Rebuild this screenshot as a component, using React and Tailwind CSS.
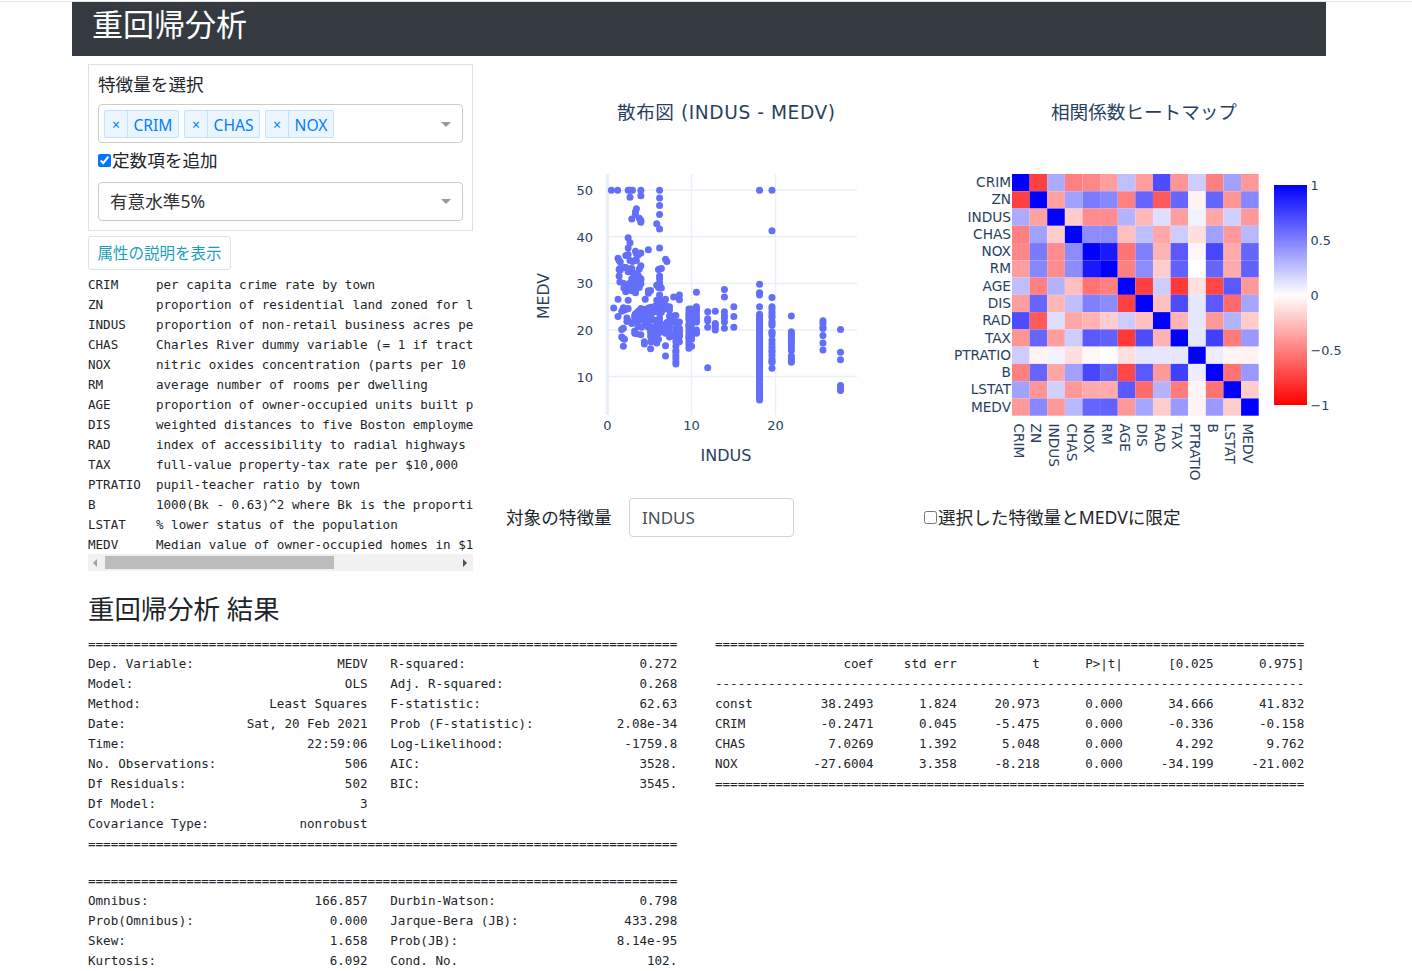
const names = ["CRIM", "ZN", "INDUS", "CHAS", "NOX", "RM", "AGE", "DIS", "RAD", "TAX", "PTRATIO", "B", "LSTAT", "MEDV"];

const corr = [
  [1, -.75, .33, -.5, -.47, -.38, .25, -.38, .7, -.42, .2, -.5, .37, -.4],
  [-.75, 1, -.37, .37, .52, .47, -.5, .6, -.65, .6, -.05, .6, -.42, .47],
  [.33, -.37, 1, -.2, -.45, -.45, .3, -.28, .13, -.38, .05, -.35, .18, -.4],
  [-.5, .37, -.2, 1, .45, .45, -.25, .25, -.35, .2, -.13, .37, -.4, .28],
  [-.47, .52, -.45, .45, 1, .9, -.55, .5, -.3, .65, -.03, .72, -.33, .6],
  [-.38, .47, -.45, .45, .9, 1, -.5, .45, -.2, .62, 0, .6, -.33, .62],
  [.25, -.5, .3, -.25, -.55, -.5, 1, -.75, .2, -.78, -.12, -.72, .65, -.4],
  [-.38, .6, -.28, .25, .5, .45, -.75, 1, -.25, .7, .1, .65, -.58, .35],
  [.7, -.65, .13, -.35, -.3, -.2, .2, -.25, 1, -.3, .1, -.4, .3, -.2],
  [-.42, .6, -.38, .2, .65, .62, -.78, .7, -.3, 1, .1, .75, -.52, .4],
  [.2, -.05, .05, -.13, -.03, 0, -.12, .1, .1, .1, 1, .07, -.04, -.05],
  [-.5, .6, -.35, .37, .72, .6, -.72, .65, -.4, .75, .07, 1, -.55, .4],
  [.37, -.42, .18, -.4, -.33, -.33, .65, -.58, .3, -.52, -.04, -.55, 1, -.2],
  [-.4, .47, -.4, .28, .6, .62, -.4, .35, -.2, .4, -.05, .4, -.2, 1],
];

// INDUS value -> MEDV values, read off the scatter
const points = {
  0.46: [50], 0.74: [24.7], 1.21: [50], 1.25: [35.4, 26.6, 22.9], 1.38: [34.9, 33, 31.6], 1.47: [33.2, 30.3],
  1.52: [34.6, 32.9], 1.69: [24, 20.1, 18.5], 1.89: [24.8, 20.4, 18.2, 16.5], 1.96: [30, 29], 2.02: [33.4, 24.3, 18],
  2.18: [36, 33.4, 28.7, 28.2], 2.31: [24.5, 22.6, 21.8], 2.46: [50, 37.6, 36.2, 39.8, 32.5, 29.6, 26.4, 24.6, 22],
  2.68: [50, 48.5, 38.7, 34.9, 33.1, 30.1, 28.7], 2.89: [43.8, 33.2, 31, 28.4, 21.4], 2.97: [50, 34.7, 32.4, 30.5, 28.6],
  3.24: [32, 29.1, 23.1, 22.6, 19.8, 19.3], 3.33: [45.4, 44.8, 36.9, 35, 31.5, 28.7, 28, 23.5, 22.3], 3.44: [46, 36.4, 34.9, 30.7, 29.9, 22.9, 19.2],
  3.64: [36.1, 31.8, 30.1, 24, 21.9, 20.8], 3.78: [44, 33.1, 31.2, 29.1, 23.2], 3.97: [50, 48.8, 43.5, 43.1, 36.5, 33.8, 31, 30.8, 29.9, 24.6, 22.5, 19],
  4.05: [23.1, 20.6], 4.39: [24.4, 22, 17.5, 17], 4.49: [26.6, 23.9, 22.9, 22.5, 21.4], 4.86: [37.2, 28.4, 27.9, 24.7, 23.9, 22.8, 21.7, 20.6],
  5.13: [28.5, 24.8, 23, 22.2, 20.6, 19.5, 18.7, 16], 5.19: [24.9, 23.2, 22.3, 20.7, 19.7, 18.5, 17.5], 5.64: [25.1, 23.9, 22.1, 20.4, 19.3, 18],
  5.86: [42.8, 29.6, 26.4, 24.8, 24, 21.5, 20, 18.9, 17.6, 17.2], 6.07: [33, 29.1, 26, 24.1, 22, 21, 19.4, 18], 6.2: [50, 48.3, 46.7, 44.8, 41.7, 37.6, 33.1, 31.6, 31, 30.1, 29.8, 27.5, 25, 24.4, 23.6, 22.6, 21.9, 20.6, 19.5],
  6.41: [33.2, 29, 26.2, 24.7, 23.8, 20.1], 6.91: [35.2, 26.6, 25.3, 24.7, 21.2, 20, 19.3, 16.6, 14.4], 7.07: [34.7, 24.5, 21.6],
  7.38: [25, 24.3, 23, 22, 20.7, 19.5, 18.5], 7.87: [27.1, 23, 22, 21.7, 19, 18.9], 8.14: [23.1, 21.6, 20.4, 19.9, 19.1, 18.2, 17.5, 16.5, 15.6, 15.2, 14.5, 13.9, 13.2, 12.7],
  8.56: [27.5, 26.5, 21.7, 20.4, 19.6, 19.5, 18.9, 18.6, 17.5], 9.69: [24.5, 23.7, 23.2, 22.8, 22.2, 21.2, 21, 20.5, 19.7, 19, 18.5, 18.2, 17.5, 16.8, 16.1],
  10.01: [24.5, 23.4, 22, 21.6, 21.2, 20, 19.6, 18.5, 18, 16.5], 10.59: [28.1, 25, 24.4, 24, 23.3, 22.6, 22.2, 21.7, 20, 19.5, 19.3],
  11.93: [23.9, 22.4, 22, 20.6, 11.9], 12.83: [24, 21.4, 21, 20.5, 20], 13.92: [28.7, 27.1, 23.9, 23.1, 22.6, 21.7, 20.4], 15.04: [25, 22.9, 20.6],
  19.58: [50, 41.3, 27, 25, 24.5, 23.8, 23.1, 22.7, 21.8, 21.4, 21, 19.6, 19.4, 19, 17.8, 17, 16.3, 15.6, 15.3, 14.6, 13.8, 13.3, 13, 11.8],
  21.89: [23, 19.6, 19.1, 18.7, 18.4, 17.8, 17.4, 16.8, 16.2, 15.6, 14.4, 14, 13.4, 13.1],
  25.65: [22, 21.4, 20.6, 20.3, 18.8, 17.2, 15.7],
  27.74: [20.1, 15.2, 13.6, 8.1, 7.6, 7],
};
const column18 = [50, 29.8, 28, 27.5, 25];
for (let v = 5; v <= 23.6; v += 0.4) column18.push(v);
points[18.1] = column18;

const attrs = [
  ["CRIM", "per capita crime rate by town"],
  ["ZN", "proportion of residential land zoned for lots over 25,000 sq.ft."],
  ["INDUS", "proportion of non-retail business acres per town"],
  ["CHAS", "Charles River dummy variable (= 1 if tract bounds river; 0 otherwise)"],
  ["NOX", "nitric oxides concentration (parts per 10 million)"],
  ["RM", "average number of rooms per dwelling"],
  ["AGE", "proportion of owner-occupied units built prior to 1940"],
  ["DIS", "weighted distances to five Boston employment centres"],
  ["RAD", "index of accessibility to radial highways"],
  ["TAX", "full-value property-tax rate per $10,000"],
  ["PTRATIO", "pupil-teacher ratio by town"],
  ["B", "1000(Bk - 0.63)^2 where Bk is the proportion of blacks by town"],
  ["LSTAT", "% lower status of the population"],
  ["MEDV", "Median value of owner-occupied homes in $1000's"],
];

const row = (a, b, c, d) => `${a}${b.padStart(37 - a.length)}   ${c}${d.padStart(38 - c.length)}`;
const coefRow = (n, a, b, c, d, e, f) =>
  n.padEnd(8) + a.padStart(13) + b.padStart(11) + c.padStart(11) + d.padStart(11) + e.padStart(12) + f.padStart(12);
const eq = "=".repeat(78);
const dash = "-".repeat(78);

const summary1 = [
  eq,
  row("Dep. Variable:", "MEDV", "R-squared:", "0.272"),
  row("Model:", "OLS", "Adj. R-squared:", "0.268"),
  row("Method:", "Least Squares", "F-statistic:", "62.63"),
  row("Date:", "Sat, 20 Feb 2021", "Prob (F-statistic):", "2.08e-34"),
  row("Time:", "22:59:06", "Log-Likelihood:", "-1759.8"),
  row("No. Observations:", "506", "AIC:", "3528."),
  row("Df Residuals:", "502", "BIC:", "3545."),
  row("Df Model:", "3", "", ""),
  row("Covariance Type:", "nonrobust", "", ""),
  eq,
].join("\n");

const summary2 = [
  eq,
  row("Omnibus:", "166.857", "Durbin-Watson:", "0.798"),
  row("Prob(Omnibus):", "0.000", "Jarque-Bera (JB):", "433.298"),
  row("Skew:", "1.658", "Prob(JB):", "8.14e-95"),
  row("Kurtosis:", "6.092", "Cond. No.", "102."),
  eq,
].join("\n");

const coefTable = [
  eq,
  coefRow("", "coef", "std err", "t", "P>|t|", "[0.025", "0.975]"),
  dash,
  coefRow("const", "38.2493", "1.824", "20.973", "0.000", "34.666", "41.832"),
  coefRow("CRIM", "-0.2471", "0.045", "-5.475", "0.000", "-0.336", "-0.158"),
  coefRow("CHAS", "7.0269", "1.392", "5.048", "0.000", "4.292", "9.762"),
  coefRow("NOX", "-27.6004", "3.358", "-8.218", "0.000", "-34.199", "-21.002"),
  eq,
].join("\n");

function cellColor(v) {
  const c = Math.round(255 * (1 - Math.abs(v)));
  return v >= 0 ? `rgb(${c},${c},255)` : `rgb(255,${c},${c})`;
}

function ScatterPlot() {
  const px = (x) => 90.5 + x * 8.4;
  const py = (y) => 343.2 - y * 4.66;
  return (
    <svg width="418" height="418" viewBox="0 0 418 418" className="shrink-0 font-['DejaVu_Sans','Noto_Sans_CJK_JP',sans-serif]">
      <text x="209" y="39" textAnchor="middle" fontSize="18.6" textLength="218" fill="#2a3f5f">散布図 (INDUS - MEDV)</text>
      {[10, 20, 30, 40, 50].map((v) => (
        <g key={v}>
          <line x1="89" x2="340" y1={py(v)} y2={py(v)} stroke="#ebf0f8" strokeWidth="1.5" />
          <text x="76" y={py(v) + 5} textAnchor="end" fontSize="13" fill="#2a3f5f">{v}</text>
        </g>
      ))}
      {[10, 20].map((v) => (
        <line key={v} x1={px(v)} x2={px(v)} y1="94" y2="335" stroke="#ebf0f8" strokeWidth="1.5" />
      ))}
      <line x1="90.5" x2="90.5" y1="94" y2="335" stroke="#ebf0f8" strokeWidth="3.5" />
      {Object.entries(points).flatMap(([x, ys]) =>
        ys.map((y, i) => <circle key={x + "-" + i} cx={px(Number(x))} cy={py(y)} r="3.5" fill="#636efa" />)
      )}
      {[0, 10, 20].map((v) => (
        <text key={v} x={px(v)} y="350" textAnchor="middle" fontSize="13" fill="#2a3f5f">{v}</text>
      ))}
      <text x="209" y="381" textAnchor="middle" fontSize="16" fill="#2a3f5f">INDUS</text>
      <text transform="translate(32 216) rotate(-90)" textAnchor="middle" fontSize="15.7" fill="#2a3f5f">MEDV</text>
    </svg>
  );
}

function Heatmap() {
  const left = 77;
  const top = 94;
  const w = 246.7 / 14;
  const h = 241.7 / 14;
  return (
    <svg width="418" height="418" viewBox="0 0 418 418" className="shrink-0 overflow-visible font-['DejaVu_Sans','Noto_Sans_CJK_JP',sans-serif]">
      <defs>
        <linearGradient id="bar" x1="0" y1="1" x2="0" y2="0">
          <stop offset="0" stopColor="#ff0000" />
          <stop offset="0.5" stopColor="#ffffff" />
          <stop offset="1" stopColor="#0000ff" />
        </linearGradient>
      </defs>
      <text x="209" y="39" textAnchor="middle" fontSize="18.6" fill="#2a3f5f">相関係数ヒートマップ</text>
      {corr.map((r, i) =>
        r.map((v, j) => (
          <rect key={i + "-" + j} x={left + j * w} y={top + i * h} width={w} height={h} fill={cellColor(v)} />
        ))
      )}
      {names.map((n, i) => (
        <text key={n} x={left - 1} y={top + i * h + h / 2 + 4.5} textAnchor="end" fontSize="13.7" fill="#2a3f5f">{n}</text>
      ))}
      {names.map((n, i) => (
        <text key={n} transform={`translate(${left + i * w + w / 2 - 7} 343.5) rotate(90)`} fontSize="13.7" fill="#2a3f5f">{n}</text>
      ))}
      <rect x="339" y="105" width="33" height="220" fill="url(#bar)" />
      {[["1", 105], ["0.5", 160], ["0", 215], ["−0.5", 270], ["−1", 325]].map(([t, y]) => (
        <text key={t} x="375.5" y={y + 4.5} fontSize="12.8" fill="#2a3f5f">{t}</text>
      ))}
    </svg>
  );
}

function Tag({ label, nameWidth }) {
  return (
    <span className="flex h-[28px] items-center rounded-[2px] border border-[#c2e0ff] bg-[#ebf5ff] text-[15.6px] text-[#007eff]">
      <span className="flex h-full w-[23px] items-center justify-center border-r border-[#c2e0ff] text-[14px]">×</span>
      <span className={nameWidth + " pt-[3px] text-center"}>{label}</span>
    </span>
  );
}

function Caret() {
  return <span className="h-0 w-0 border-x-[5.5px] border-t-[5.5px] border-x-transparent border-t-[#999999]" />;
}

function Mono({ children, className }) {
  return (
    <pre className={"whitespace-pre font-['DejaVu_Sans_Mono',monospace] text-[12.55px] leading-[20px] text-[#212529] " + (className || "")}>
      {children}
    </pre>
  );
}

export default function App() {
  return (
    <div className="h-screen overflow-hidden bg-white pt-[1px] font-['Noto_Sans','Noto_Sans_CJK_JP',sans-serif] text-[#212529]">
      <div className="h-[1px] bg-[#e5e5e5]" />
      <div className="mx-[72px] w-[1254px]">
        <div className="flex h-[54px] items-center bg-[#343a40] pb-[10px] pl-[20px] text-[31px] text-white">重回帰分析</div>

        <div className="flex px-4 pt-2">
          <div className="w-[385px] shrink-0">
            <div className="h-[167px] border border-[#dee2e6] px-[9px] pt-[6px]">
              <div className="h-[33px] text-[17.6px] leading-[26px]">特徴量を選択</div>
              <div className="flex h-[39px] items-center justify-between rounded-[4px] border border-[#cccccc] pl-[5px] pr-[11px] pt-[1px]">
                <div className="flex gap-[5px]">
                  <Tag label="CRIM" nameWidth="w-[50px]" />
                  <Tag label="CHAS" nameWidth="w-[51px]" />
                  <Tag label="NOX" nameWidth="w-[44px]" />
                </div>
                <Caret />
              </div>
              <label className="mt-[5px] flex h-[25px] items-center text-[17.6px]">
                <input type="checkbox" defaultChecked className="m-0 h-[13px] w-[13px] accent-[#0075ff]" />
                <span className="ml-[1px]">定数項を追加</span>
              </label>
              <div className="mt-[9px] flex h-[39px] items-center justify-between rounded-[4px] border border-[#cccccc] pl-[11px] pr-[11px] text-[17.6px] text-[#333333]">
                有意水準5%
                <Caret />
              </div>
            </div>
            <div className="mt-[5px] flex h-[34px] w-[143px] items-center justify-center rounded-[3px] border border-[#dee2e6] pt-[1px] text-[15.5px] text-[#17a2b8]">
              属性の説明を表示
            </div>
            <Mono className="mt-[5px] h-[279px] overflow-hidden">
              {attrs.map(([k, d]) => k.padEnd(9) + d).join("\n")}
            </Mono>
            <div className="flex h-[17px] items-center bg-[#f1f1f1]">
              <span className="ml-[5px] h-0 w-0 border-y-[4px] border-r-[4px] border-y-transparent border-r-[#a3a3a3]" />
              <span className="ml-[8px] h-[13px] w-[229px] bg-[#bcbcbc]" />
              <span className="ml-auto mr-[6px] h-0 w-0 border-y-[4px] border-l-[4px] border-y-transparent border-l-[#505050]" />
            </div>
          </div>

          <div className="min-w-0 flex-1">
            <div className="flex pl-[44px] pt-[16px]">
              <ScatterPlot />
              <Heatmap />
            </div>
            <div className="flex h-[39px] items-center pl-[33px] text-[17.6px]">
              <span className="w-[123px]">対象の特徴量</span>
              <div className="flex h-[39px] w-[165px] items-center rounded-[4px] border border-[#ced4da] pl-[12px] pt-[1px] text-[17px] text-[#495057]">INDUS</div>
              <label className="ml-[130px] flex items-center">
                <input type="checkbox" className="m-0 h-[13px] w-[13px]" />
                <span className="ml-[1px]">選択した特徴量とMEDVに限定</span>
              </label>
            </div>
          </div>
        </div>

        <div className="px-4">
          <div className="pt-[16px] text-[26.4px] leading-[44px]">重回帰分析 結果</div>
          <div className="mt-[3px] flex">
            <div className="w-[627px] shrink-0">
              <Mono className="mb-[17px]">{summary1}</Mono>
              <Mono>{summary2}</Mono>
            </div>
            <Mono>{coefTable}</Mono>
          </div>
        </div>
      </div>
    </div>
  );
}
